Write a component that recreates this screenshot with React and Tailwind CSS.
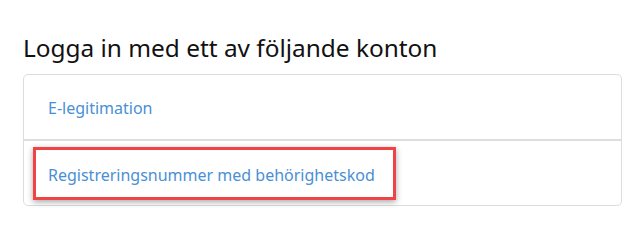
import React from "react";

const App = () => {
  return (
    <div
      className="w-[644px] h-[245px] bg-white pt-[33px] pl-[23px]"
      style={{ fontFamily: '"Noto Sans", "Open Sans", sans-serif' }}
    >
      <h2 className="text-[24.4px] leading-[29px] text-[#111] font-normal mb-[12px]">
        Logga in med ett av följande konton
      </h2>
      <div className="w-[599px] border border-[#dddddd] rounded-[5px] bg-white">
        <div className="h-[65px] flex items-center px-[24px] pt-[2px] border-b border-[#dddddd]">
          <a href="#" className="text-[16px] text-[#4a8fd5]">
            E-legitimation
          </a>
        </div>
        <div className="relative h-[65px] flex items-center px-[24px] pt-[3px] border-t border-[#dddddd]">
          <a href="#" className="text-[16px] text-[#4a8fd5]">
            Registreringsnummer med behörighetskod
          </a>
          <div className="absolute left-[9px] top-[6px] w-[363px] h-[53px] border-[3px] border-[#f04346] shadow-[0_2px_6px_rgba(0,0,0,0.35)] pointer-events-none"></div>
        </div>
      </div>
    </div>
  );
};

export default App;
